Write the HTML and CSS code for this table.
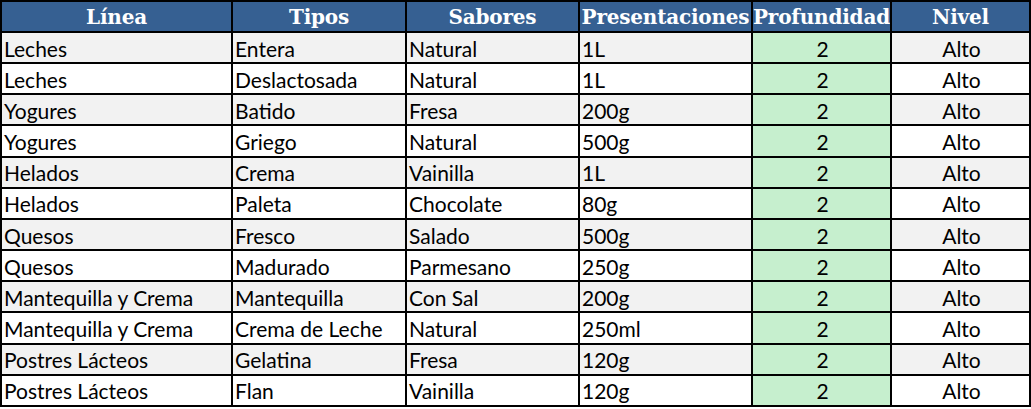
FILE: index.html
```html
<!DOCTYPE html>
<html lang="es">
<head>
<meta charset="utf-8">
<title>Tabla</title>
<link rel="stylesheet" href="styles.css">
</head>
<body>
<table class="grid">
  <colgroup>
    <col class="c1"><col class="c2"><col class="c3"><col class="c4"><col class="c5"><col class="c6">
  </colgroup>
  <thead>
    <tr><th>Línea</th><th>Tipos</th><th>Sabores</th><th>Presentaciones</th><th>Profundidad</th><th>Nivel</th></tr>
  </thead>
  <tbody>
    <tr><td>Leches</td><td>Entera</td><td>Natural</td><td>1L</td><td class="num">2</td><td class="ctr">Alto</td></tr>
    <tr><td>Leches</td><td>Deslactosada</td><td>Natural</td><td>1L</td><td class="num">2</td><td class="ctr">Alto</td></tr>
    <tr><td>Yogures</td><td>Batido</td><td>Fresa</td><td>200g</td><td class="num">2</td><td class="ctr">Alto</td></tr>
    <tr><td>Yogures</td><td>Griego</td><td>Natural</td><td>500g</td><td class="num">2</td><td class="ctr">Alto</td></tr>
    <tr><td>Helados</td><td>Crema</td><td>Vainilla</td><td>1L</td><td class="num">2</td><td class="ctr">Alto</td></tr>
    <tr><td>Helados</td><td>Paleta</td><td>Chocolate</td><td>80g</td><td class="num">2</td><td class="ctr">Alto</td></tr>
    <tr><td>Quesos</td><td>Fresco</td><td>Salado</td><td>500g</td><td class="num">2</td><td class="ctr">Alto</td></tr>
    <tr><td>Quesos</td><td>Madurado</td><td>Parmesano</td><td>250g</td><td class="num">2</td><td class="ctr">Alto</td></tr>
    <tr><td>Mantequilla y Crema</td><td>Mantequilla</td><td>Con Sal</td><td>200g</td><td class="num">2</td><td class="ctr">Alto</td></tr>
    <tr><td>Mantequilla y Crema</td><td>Crema de Leche</td><td>Natural</td><td>250ml</td><td class="num">2</td><td class="ctr">Alto</td></tr>
    <tr><td>Postres Lácteos</td><td>Gelatina</td><td>Fresa</td><td>120g</td><td class="num">2</td><td class="ctr">Alto</td></tr>
    <tr><td>Postres Lácteos</td><td>Flan</td><td>Vainilla</td><td>120g</td><td class="num">2</td><td class="ctr">Alto</td></tr>
  </tbody>
</table>
</body>
</html>
```
FILE: styles.css
```css
html, body {
  margin: 0;
  padding: 0;
  background: #ffffff;
}
.grid {
  border-collapse: collapse;
  table-layout: fixed;
  width: 1029px;
  font-family: Lato, "Liberation Sans", sans-serif;
  font-size: 21px;
  color: #000;
}
.c1 { width: 231px; }
.c2 { width: 174px; }
.c3 { width: 173px; }
.c4 { width: 173px; }
.c5 { width: 139px; }
.c6 { width: 139px; }
.grid th, .grid td {
  border: 2px solid #000;
  padding: 0 0 0 2px;
  white-space: nowrap;
  overflow: hidden;
  line-height: 1;
}
.grid th {
  background: #366092;
  color: #fff;
  font-family: "DejaVu Serif", serif;
  font-weight: bold;
  font-size: 20px;
  height: 29px;
  padding: 0;
  text-align: center;
  letter-spacing: -0.2px;
}
.grid td {
  height: 28.17px;
  vertical-align: middle;
  padding-top: 1px;
  font-weight: 400;
}
.grid tbody tr:nth-child(odd) td { background: #f2f2f2; }
.grid tbody tr td.num { background: #c6efce; text-align: center; }
.grid td.ctr { text-align: center; }
```
